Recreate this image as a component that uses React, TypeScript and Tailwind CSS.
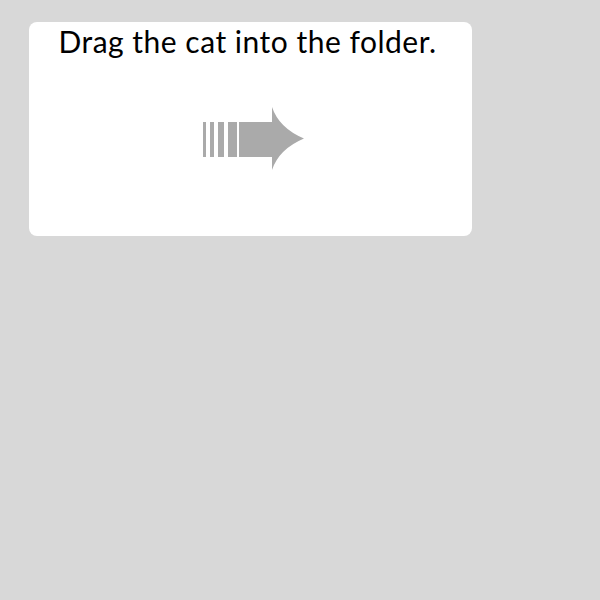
export default function App() {
  return (
    <div className="min-h-[600px] w-[600px] bg-[#d8d8d8] pl-[29px] pt-[22px]">
      <div className="flex h-[214px] w-[443px] flex-col items-center rounded-[8px] bg-white">
        <h1 className="mt-[1px] pr-[6px] font-['Lato',sans-serif] text-[30px] leading-[36px] font-normal tracking-[0.5px] text-black">
          Drag the cat into the folder.
        </h1>
        <div className="mt-[48px] ml-[4px]">
          <svg width="102" height="64" viewBox="202 107 102 64" fill="#aaaaaa">
            <rect x="203" y="122" width="3" height="35" />
            <rect x="210" y="122" width="4" height="35" />
            <rect x="218" y="122" width="6" height="35" />
            <rect x="228" y="122" width="9" height="35" />
            <rect x="239" y="122" width="11" height="35" />
            <path d="M250 122 H272 V107 Q279 128 304 138.5 Q279 149 272 170 V157 H250 Z" />
          </svg>
        </div>
      </div>
    </div>
  );
}
